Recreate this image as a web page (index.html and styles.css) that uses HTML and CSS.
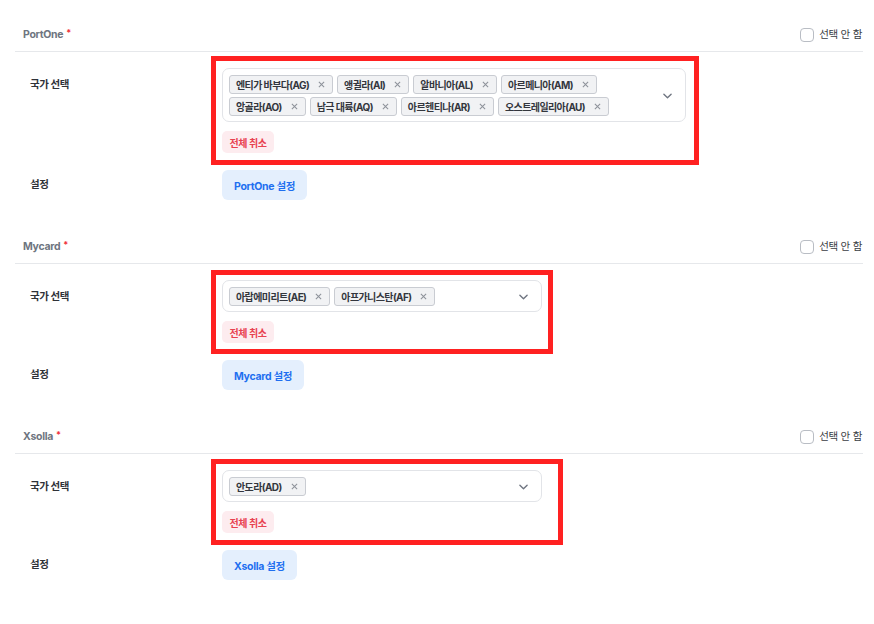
FILE: index.html
```html
<!DOCTYPE html>
<html lang="ko">
<head>
<meta charset="utf-8">
<title>결제 수단 국가 설정</title>
<link rel="stylesheet" href="styles.css">
</head>
<body>
<div class="page">

  <section class="group">
    <div class="group-head">
      <span class="group-title">PortOne<span class="req">*</span></span>
      <label class="skip"><span class="checkbox"></span>선택 안 함</label>
    </div>
    <div class="row row-top">
      <div class="row-label">국가 선택</div>
      <div class="field field-wide">
        <div class="select">
          <div class="tags">
            <span class="tag">엔티가 바부다(AG)<svg class="x" viewBox="0 0 8 8"><path d="M1 1L7 7M7 1L1 7"/></svg></span>
            <span class="tag">앵귈라(AI)<svg class="x" viewBox="0 0 8 8"><path d="M1 1L7 7M7 1L1 7"/></svg></span>
            <span class="tag">알바니아(AL)<svg class="x" viewBox="0 0 8 8"><path d="M1 1L7 7M7 1L1 7"/></svg></span>
            <span class="tag">아르메니아(AM)<svg class="x" viewBox="0 0 8 8"><path d="M1 1L7 7M7 1L1 7"/></svg></span>
            <span class="tag">앙골라(AO)<svg class="x" viewBox="0 0 8 8"><path d="M1 1L7 7M7 1L1 7"/></svg></span>
            <span class="tag">남극 대륙(AQ)<svg class="x" viewBox="0 0 8 8"><path d="M1 1L7 7M7 1L1 7"/></svg></span>
            <span class="tag">아르헨티나(AR)<svg class="x" viewBox="0 0 8 8"><path d="M1 1L7 7M7 1L1 7"/></svg></span>
            <span class="tag">오스트레일리아(AU)<svg class="x" viewBox="0 0 8 8"><path d="M1 1L7 7M7 1L1 7"/></svg></span>
          </div>
          <svg class="chev" viewBox="0 0 10 6"><path d="M1 1L5 5L9 1"/></svg>
        </div>
        <button class="clear">전체 취소</button>
        <div class="annot annot-1"></div>
      </div>
    </div>
    <div class="row">
      <div class="row-label">설정</div>
      <button class="settings">PortOne 설정</button>
    </div>
  </section>

  <section class="group">
    <div class="group-head">
      <span class="group-title">Mycard<span class="req">*</span></span>
      <label class="skip"><span class="checkbox"></span>선택 안 함</label>
    </div>
    <div class="row row-top">
      <div class="row-label">국가 선택</div>
      <div class="field field-narrow">
        <div class="select">
          <div class="tags">
            <span class="tag">아랍에미리트(AE)<svg class="x" viewBox="0 0 8 8"><path d="M1 1L7 7M7 1L1 7"/></svg></span>
            <span class="tag">아프가니스탄(AF)<svg class="x" viewBox="0 0 8 8"><path d="M1 1L7 7M7 1L1 7"/></svg></span>
          </div>
          <svg class="chev" viewBox="0 0 10 6"><path d="M1 1L5 5L9 1"/></svg>
        </div>
        <button class="clear">전체 취소</button>
        <div class="annot annot-2"></div>
      </div>
    </div>
    <div class="row">
      <div class="row-label">설정</div>
      <button class="settings">Mycard 설정</button>
    </div>
  </section>

  <section class="group">
    <div class="group-head">
      <span class="group-title">Xsolla<span class="req">*</span></span>
      <label class="skip"><span class="checkbox"></span>선택 안 함</label>
    </div>
    <div class="row row-top">
      <div class="row-label">국가 선택</div>
      <div class="field field-narrow">
        <div class="select">
          <div class="tags">
            <span class="tag">안도라(AD)<svg class="x" viewBox="0 0 8 8"><path d="M1 1L7 7M7 1L1 7"/></svg></span>
          </div>
          <svg class="chev" viewBox="0 0 10 6"><path d="M1 1L5 5L9 1"/></svg>
        </div>
        <button class="clear">전체 취소</button>
        <div class="annot annot-3"></div>
      </div>
    </div>
    <div class="row">
      <div class="row-label">설정</div>
      <button class="settings">Xsolla 설정</button>
    </div>
  </section>

</div>
</body>
</html>
```

FILE: styles.css
```css
* { box-sizing: border-box; }

html, body {
  margin: 0;
  padding: 0;
  background: #ffffff;
}

body {
  font-family: "Inter", "Noto Sans CJK KR", sans-serif;
  color: #333741;
  font-size: 10.5px;
}

.page {
  padding: 0 11px 0 15px;
}

.group {
  margin-bottom: 12px;
}

.group-head {
  display: flex;
  align-items: center;
  justify-content: space-between;
  padding: 26px 1px 7px 8px;
  border-bottom: 1px solid #e6e8eb;
  line-height: 18px;
}

.group-title {
  font-weight: 700;
  color: #6e7580;
  font-size: 10.5px;
  letter-spacing: -0.3px;
}

.req {
  color: #f0323c;
  margin-left: 3px;
  font-size: 9px;
  position: relative;
  top: -2px;
}

.skip {
  display: flex;
  align-items: center;
  gap: 5px;
  font-size: 10.5px;
  color: #3a3d44;
  letter-spacing: -0.3px;
}

.checkbox {
  width: 14px;
  height: 14px;
  border: 1px solid #b9bdc4;
  border-radius: 4px;
  background: #fff;
}

.row {
  display: flex;
  align-items: center;
  padding-left: 15px;
  margin-top: 17px;
}

.row-top {
  align-items: flex-start;
  margin-top: 16px;
}

.row-label {
  width: 192px;
  flex: none;
  font-weight: 700;
  color: #2f3238;
  line-height: 18px;
  letter-spacing: -0.4px;
}

.row-top .row-label {
  padding-top: 8px;
}

.field {
  position: relative;
}

.field-wide { width: 464px; }
.field-narrow { width: 320px; }

.select {
  display: flex;
  align-items: center;
  border: 1px solid #e2e4e8;
  border-radius: 7px;
  padding: 6px 13px 5px 6px;
  min-height: 32px;
}

.tags {
  flex: 1;
  display: flex;
  flex-wrap: wrap;
  gap: 3px 4px;
  padding-right: 18px;
}

.tag {
  display: inline-flex;
  align-items: center;
  gap: 9px;
  height: 19px;
  padding: 0 7px 0 6px;
  border: 1px solid #c9ccd2;
  border-radius: 3px;
  background: #f1f2f4;
  font-weight: 700;
  color: #33363d;
  font-size: 10px;
  letter-spacing: -0.6px;
  white-space: nowrap;
}

.x {
  width: 7px;
  height: 7px;
  flex: none;
}

.x path {
  stroke: #8d929a;
  stroke-width: 1.2;
  fill: none;
}

.chev {
  width: 9px;
  height: 6px;
  flex: none;
}

.chev path {
  stroke: #6f7580;
  stroke-width: 1.5;
  fill: none;
  stroke-linecap: round;
  stroke-linejoin: round;
}

.clear {
  display: block;
  margin-top: 9px;
  height: 22px;
  width: 52px;
  padding: 0;
  border: none;
  border-radius: 5px;
  background: #fdecef;
  color: #e8414f;
  font-family: inherit;
  font-weight: 700;
  font-size: 10px;
  letter-spacing: -0.4px;
}

.settings {
  height: 30px;
  padding: 0 12px;
  border: none;
  border-radius: 6px;
  background: #e4effd;
  color: #1f6ff0;
  font-family: inherit;
  font-weight: 700;
  font-size: 10.5px;
  letter-spacing: -0.3px;
}

.annot {
  position: absolute;
  border: 5px solid #ff2121;
  pointer-events: none;
}

.annot-1 { top: -12px; left: -11px; right: -13px; bottom: -12px; }
.annot-2 { top: -10px; left: -11px; right: -11px; bottom: -11px; }
.annot-3 { top: -11px; left: -11px; right: -21px; bottom: -12px; }
```
